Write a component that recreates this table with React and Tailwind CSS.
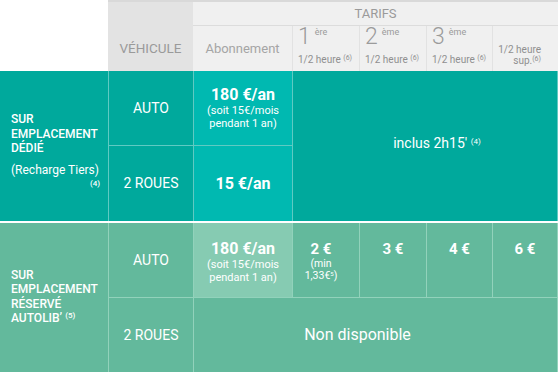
import React from "react";

const font = { fontFamily: "Roboto, 'Liberation Sans', sans-serif" };

function HeadTarif({ n, sup }) {
  return (
    <div className="flex flex-col justify-end pl-[5px] pb-[5px] border-l border-[#e2e2e2]">
      <div className="flex items-start leading-none">
        <span className="text-[23px] font-light text-[#9b9b9b] leading-[20px]">{n}</span>
        <span className="text-[9px] text-[#9b9b9b] ml-[4px] mt-[1px]">{sup}</span>
      </div>
      <div className="text-[10px] text-[#8f8f8f] leading-[12px] mt-[7px] whitespace-nowrap">
        1/2 heure <sup className="text-[7px]">(6)</sup>
      </div>
    </div>
  );
}

function Abo({ top }) {
  return (
    <div className={`flex flex-col items-center ${top}`}>
      <span className="text-[16px] font-bold leading-[19px]">180 €/an</span>
      <span className="text-[11px] leading-[13px]">(soit 15€/mois</span>
      <span className="text-[11px] leading-[13px]">pendant 1 an)</span>
    </div>
  );
}

export default function App() {
  return (
    <div className="w-[560px] h-[373px] bg-white text-white overflow-hidden" style={font}>
      {/* en-tête */}
      <div className="flex h-[71px]">
        <div className="w-[108px] bg-white" />
        <div className="w-[450px] flex flex-col">
          <div className="h-[2px] bg-[#d9d9d9]" />
          <div className="flex flex-1">
            <div className="w-[85px] bg-[#e3e3e3] flex items-end justify-center pb-[13px] text-[13.5px] text-[#9a9a9a]">
              VÉHICULE
            </div>
            <div className="flex-1 flex flex-col bg-[#f0f0f0]">
              <div className="h-[24px] border-b border-[#dcdcdc] flex items-center justify-center text-[13px] text-[#9a9a9a]">
                TARIFS
              </div>
              <div className="flex-1 grid grid-cols-[99px_67px_67px_66px_51px]">
                <div className="flex items-end justify-center pb-[13px] text-[13px] text-[#a5a5a5]">
                  Abonnement
                </div>
                <HeadTarif n="1" sup="ère" />
                <HeadTarif n="2" sup="ème" />
                <HeadTarif n="3" sup="ème" />
                <div className="border-l border-[#e2e2e2] flex flex-col items-end justify-end pr-[2px] pb-[5px] text-[10px] text-[#8f8f8f] leading-[11px]">
                  <span className="whitespace-nowrap">1/2 heure</span>
                  <span className="whitespace-nowrap">
                    sup.<sup className="text-[7px]">(6)</sup>
                  </span>
                </div>
              </div>
            </div>
          </div>
        </div>
      </div>

      {/* emplacement dédié */}
      <div className="w-[558px] grid grid-cols-[108px_85px_99px_266px] grid-rows-[75px_75px] bg-[#00a99c]">
        <div className="row-span-2 flex flex-col justify-center pl-[11px] pr-[8px] pt-[12px] text-[12px] font-medium leading-[14.5px]">
          <span>SUR</span>
          <span>EMPLACEMENT</span>
          <span>DÉDIÉ</span>
          <span className="mt-[7px] font-normal">(Recharge Tiers)</span>
          <span className="self-end text-[8px]">(4)</span>
        </div>
        <div className="border-l border-b border-[#5fcac2] flex items-center justify-center text-[14px]">
          AUTO
        </div>
        <div className="border-l border-b border-[#5fcac2] bg-[#00b9b1]">
          <Abo top="pt-[14px]" />
        </div>
        <div className="row-span-2 border-l border-r border-[#5fcac2] flex items-center justify-center pl-[24px] pb-[6px] text-[14px]">
          <span>
            inclus 2h15′ <sup className="text-[8px]">(4)</sup>
          </span>
        </div>
        <div className="border-l border-[#5fcac2] flex items-center justify-center text-[14px]">
          2 ROUES
        </div>
        <div className="border-l border-[#5fcac2] bg-[#00b9b1] flex items-center justify-center text-[16px] font-bold">
          15 €/an
        </div>
      </div>

      <div className="h-[2px] bg-white" />

      {/* emplacement réservé autolib */}
      <div className="w-[558px] grid grid-cols-[108px_85px_99px_67px_67px_66px_66px] grid-rows-[75px_74px] bg-[#63b99c]">
        <div className="row-span-2 flex flex-col justify-center pl-[11px] pt-[2px] pb-[4px] text-[12px] font-medium leading-[14.5px]">
          <span>SUR</span>
          <span>EMPLACEMENT</span>
          <span>RÉSERVÉ</span>
          <span>
            AUTOLIB’ <sup className="text-[8px]">(5)</sup>
          </span>
        </div>
        <div className="border-l border-b border-[#92d2bb] flex items-center justify-center text-[14px]">
          AUTO
        </div>
        <div className="border-l border-b border-[#92d2bb] bg-[#86cbb2]">
          <Abo top="pt-[16px]" />
        </div>
        <div className="border-l border-b border-[#92d2bb] flex flex-col items-center pt-[18px] pr-[10px]">
          <span className="text-[15px] font-bold leading-[17px]">2 €</span>
          <span className="text-[10.5px] leading-[12px]">(min</span>
          <span className="text-[10.5px] leading-[12px]">
            1,33€<sup className="text-[6px]">5</sup>)
          </span>
        </div>
        <div className="border-l border-b border-[#92d2bb] flex justify-center pt-[18px]">
          <span className="text-[15px] font-bold leading-[17px]">3 €</span>
        </div>
        <div className="border-l border-b border-[#92d2bb] flex justify-center pt-[18px]">
          <span className="text-[15px] font-bold leading-[17px]">4 €</span>
        </div>
        <div className="border-l border-b border-r border-[#92d2bb] flex justify-center pt-[18px]">
          <span className="text-[15px] font-bold leading-[17px]">6 €</span>
        </div>
        <div className="border-l border-[#92d2bb] flex items-center justify-center text-[14px]">
          2 ROUES
        </div>
        <div className="col-span-5 border-l border-r border-[#92d2bb] flex items-center justify-center pr-[36px] text-[16px]">
          Non disponible
        </div>
      </div>
    </div>
  );
}
